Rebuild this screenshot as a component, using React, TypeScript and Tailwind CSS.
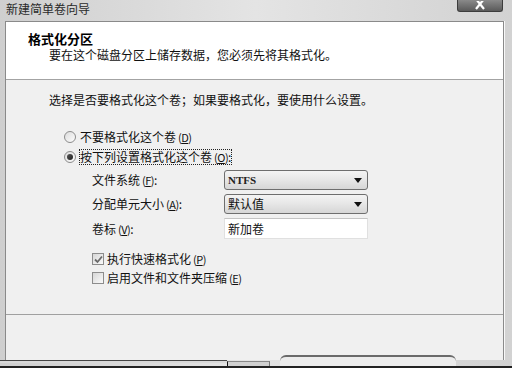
import React from 'react'

const cjk = { fontFamily: '"Noto Sans CJK SC", "Liberation Sans", sans-serif' }

function Key({ k }: { k: string }) {
  return (
    <span className="text-[11px] tracking-[-0.5px]">
      {' '}(<span className="underline">{k}</span>)
    </span>
  )
}

function Radio({ checked }: { checked?: boolean }) {
  return (
    <span className="flex h-[12px] w-[12px] shrink-0 items-center justify-center rounded-full border border-[#8c8c8c] bg-gradient-to-br from-[#dcdcdc] to-[#fdfdfd]">
      {checked && <span className="h-[6px] w-[6px] rounded-full bg-gradient-to-br from-[#555] to-[#222]" />}
    </span>
  )
}

function Check({ checked }: { checked?: boolean }) {
  return (
    <span className="flex h-[12px] w-[12px] shrink-0 items-center justify-center border border-[#8c8c8c] bg-gradient-to-br from-[#d6d6d6] to-[#fafafa]">
      {checked && (
        <svg width="9" height="9" viewBox="0 0 9 9">
          <path d="M1 4.5 L3.5 7 L8 1.5" fill="none" stroke="#6a6a6a" strokeWidth="1.8" />
        </svg>
      )}
    </span>
  )
}

function Select({ value, latin }: { value: string; latin?: boolean }) {
  return (
    <div className="flex h-[20px] w-[144px] items-center justify-between rounded-[3px] border border-[#6e6e6e] bg-gradient-to-b from-[#f4f4f4] via-[#e6e6e6] to-[#d6d6d6] pl-[3px] pr-[5px]">
      <span
        className={latin ? 'text-[11px] font-bold text-[#222]' : 'text-[12px] text-[#111]'}
        style={latin ? { fontFamily: '"Liberation Serif", serif' } : undefined}
      >
        {value}
      </span>
      <svg width="8" height="5" viewBox="0 0 8 5">
        <path d="M0 0 L8 0 L4 5 Z" fill="#111" />
      </svg>
    </div>
  )
}

export default function App() {
  return (
    <div
      className="relative h-[368px] w-[512px] overflow-hidden bg-gradient-to-r from-[#cfcfcf] via-[#e4e4e4] to-[#d2d2d2] text-[12px] leading-[16px] text-[#111]"
      style={cjk}
    >
      {/* title bar */}
      <div className="flex h-[21px] items-center pl-[6px] pb-[4px] text-[12px] text-[#2a2a2a]">新建简单卷向导</div>
      <div className="absolute left-[457px] top-0 flex h-[12px] w-[46px] items-end justify-center rounded-b-[3px] border border-t-0 border-[#3c3c3c] bg-gradient-to-b from-[#8a8a8a] to-[#5a5a5a]">
        <svg width="12" height="9" viewBox="0 0 12 9" className="mb-[1px]">
          <path d="M2 -2 L10 8 M10 -2 L2 8" stroke="#fff" strokeWidth="2.2" />
        </svg>
      </div>

      {/* wizard panel */}
      <div className="ml-[5px] mr-[8px] flex h-[339px] flex-col border border-b-0 border-[#8a8a8a] bg-[#f0f0f0] shadow-[1px_0_0_#f8f8f8]">
        <div className="h-[58px] border-b border-[#a3a3a3] bg-white pl-[22px] pt-[9px] leading-[15px]">
          <div className="text-[13px] font-bold text-black">格式化分区</div>
          <div className="mt-[1px] pl-[21px] text-[12px] text-[#111]">要在这个磁盘分区上储存数据，您必须先将其格式化。</div>
        </div>

        <div className="h-[235px] border-b border-[#a0a0a0] pl-[43px] pt-[12px]">
          <div>选择是否要格式化这个卷；如果要格式化，要使用什么设置。</div>

          <div className="mt-[19px] pl-[15px]">
            <div className="flex h-[20px] items-center gap-[4px]">
              <Radio />
              <span>
                不要格式化这个卷<Key k="D" />
              </span>
            </div>
            <div className="flex h-[20px] items-center gap-[4px]">
              <Radio checked />
              <span className="outline-1 outline-dotted outline-[#222] leading-[13px]">
                按下列设置格式化这个卷<Key k="O" />:
              </span>
            </div>

            <div className="mt-[3px] flex flex-col gap-[4px] pl-[28px]">
              <div className="flex h-[20px] items-center">
                <span className="w-[132px]">
                  文件系统<Key k="F" />:
                </span>
                <Select value="NTFS" latin />
              </div>
              <div className="flex h-[20px] items-center">
                <span className="w-[132px]">
                  分配单元大小<Key k="A" />:
                </span>
                <Select value="默认值" />
              </div>
              <div className="flex h-[21px] items-center">
                <span className="w-[132px]">
                  卷标<Key k="V" />:
                </span>
                <div className="flex h-[21px] w-[144px] items-center border border-[#e0e0e0] border-t-[#c4c4c4] bg-white pl-[3px]">
                  新加卷
                </div>
              </div>

              <div className="mt-[6px] flex h-[20px] items-center gap-[3px]">
                <Check checked />
                <span>
                  执行快速格式化<Key k="P" />
                </span>
              </div>
              <div className="-mt-[5px] flex h-[20px] items-center gap-[3px]">
                <Check />
                <span>
                  启用文件和文件夹压缩<Key k="E" />
                </span>
              </div>
            </div>
          </div>
        </div>

        <div className="flex-1" />
      </div>

      {/* bottom edge, buttons cut off */}
      <div className="flex h-[8px] items-start">
        <div className="h-[3px] w-[227px] border-t border-[#444] bg-[#d8d8d8]" />
        <div className="mt-[1px] h-[7px] w-[43px] border border-r-[#777] border-t-[#888] bg-[#d0d0d0]" />
        <div className="ml-[10px] -mt-[5px] h-[12px] w-[176px] rounded-t-[6px] border-t-2 border-[#6a6a6a] bg-[#ececec]" />
        <div className="flex-1 bg-[#f0f0f0]" />
      </div>
      <div className="absolute bottom-0 left-0 h-[2px] w-full bg-[#222]" />
    </div>
  )
}
